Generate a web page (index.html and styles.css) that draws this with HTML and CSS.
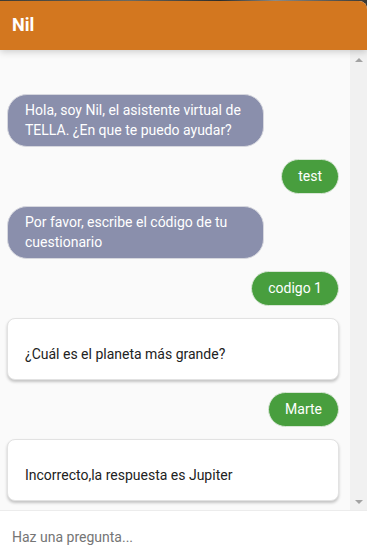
FILE: index.html
```html
<!DOCTYPE html>
<html lang="es">
<head>
<meta charset="utf-8">
<title>Nil</title>
<link rel="stylesheet" href="styles.css">
</head>
<body>
<div class="widget">
  <header class="header">Nil</header>
  <div class="body">
    <div class="messages">
      <div class="msg bot">Hola, soy Nil, el asistente virtual de TELLA. ¿En que te puedo ayudar?</div>
      <div class="msg user">test</div>
      <div class="msg bot">Por favor, escribe el código de tu cuestionario</div>
      <div class="msg user">codigo 1</div>
      <div class="card">¿Cuál es el planeta más grande?</div>
      <div class="msg user">Marte</div>
      <div class="card">Incorrecto,la respuesta es Jupiter</div>
    </div>
    <div class="scrollbar">
      <span class="arrow up"></span>
      <span class="arrow down"></span>
    </div>
  </div>
  <div class="composer">
    <input class="ask" type="text" placeholder="Haz una pregunta...">
  </div>
</div>
</body>
</html>
```
FILE: styles.css
```css
html, body {
  margin: 0;
  padding: 0;
}
body {
  background: linear-gradient(90deg, #3e3b33 0%, #6b6a62 35%, #2e2c28 60%, #8a8a86 75%, #3a3833 100%);
  font-family: Roboto, "Noto Sans", "Liberation Sans", sans-serif;
  height: 559px;
  overflow: hidden;
}
.widget {
  margin-top: 1px;
  height: 558px;
  display: flex;
  flex-direction: column;
  background: #fafafa;
  border-top-right-radius: 8px;
  overflow: hidden;
}
.header {
  flex: none;
  height: 49px;
  box-sizing: border-box;
  padding: 0 12px 2px;
  display: flex;
  align-items: center;
  background: #d3771f;
  color: #fff;
  font-size: 18px;
  font-weight: 700;
  box-shadow: 0 2px 7px rgba(0, 0, 0, 0.18);
  position: relative;
  z-index: 1;
}
.body {
  flex: none;
  height: 460px;
  display: flex;
}
.messages {
  flex: 1;
  padding: 44px 11px 10px 7px;
  display: flex;
  flex-direction: column;
  gap: 12px;
  overflow: hidden;
}
.msg {
  font-size: 14px;
  color: #fff;
  box-sizing: border-box;
}
.bot {
  align-self: flex-start;
  width: 257px;
  padding: 6px 17px;
  line-height: 19.5px;
  background: #8a8fac;
  border: 1px solid #d6d7de;
  border-radius: 20px;
}
.user {
  align-self: flex-end;
  padding: 7px 16px;
  line-height: 19px;
  background: #489e3e;
  border: 1px solid #d8e6d6;
  border-radius: 18px;
}
.card {
  flex: none;
  height: 62px;
  box-sizing: border-box;
  padding: 26px 17px 0;
  background: #fff;
  border: 1px solid #e2e2e2;
  border-radius: 8px;
  box-shadow: 0 2px 3px rgba(0, 0, 0, 0.22);
  font-size: 14px;
  line-height: 19px;
  color: #222;
}
.scrollbar {
  flex: none;
  width: 17px;
  background: #f1f1f1;
  display: flex;
  flex-direction: column;
  justify-content: space-between;
  align-items: center;
  padding: 8px 0 6px;
  box-sizing: border-box;
}
.arrow {
  width: 0;
  height: 0;
  border-left: 4px solid transparent;
  border-right: 4px solid transparent;
}
.up {
  border-bottom: 4px solid #a3a3a3;
}
.down {
  border-top: 4px solid #a3a3a3;
}
.composer {
  flex: 1;
  background: #fff;
  border-top: 1px solid #ececec;
  display: flex;
  align-items: center;
}
.ask {
  width: 100%;
  border: none;
  outline: none;
  background: transparent;
  padding: 0 12px;
  margin-top: 4px;
  font-family: Roboto, "Noto Sans", "Liberation Sans", sans-serif;
  font-size: 14px;
  color: #333;
}
.ask::placeholder {
  color: #757575;
}
```
